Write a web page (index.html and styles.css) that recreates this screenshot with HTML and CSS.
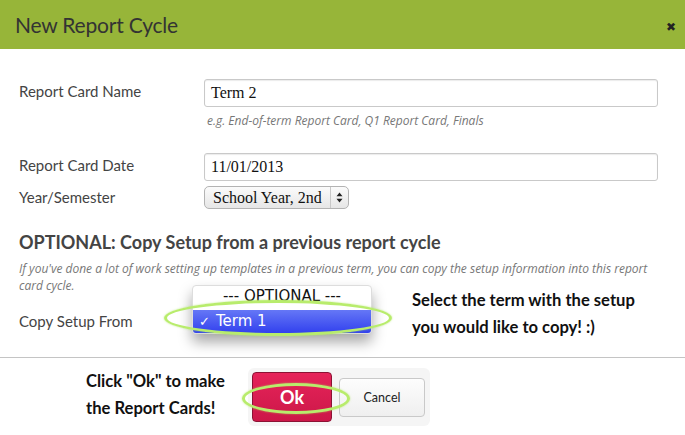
FILE: index.html
```html
<!DOCTYPE html>
<html>
<head>
<meta charset="utf-8">
<link rel="stylesheet" href="styles.css">
</head>
<body>
<div class="modal">
  <div class="modal-header">
    <h1 class="modal-title">New Report Cycle</h1>
    <span class="close">&#x2716;</span>
  </div>
  <div class="modal-body">
    <div class="row row-name">
      <label class="label">Report Card Name</label>
      <div class="field">
        <div class="input">Term 2</div>
        <div class="hint">e.g. End-of-term Report Card, Q1 Report Card, Finals</div>
      </div>
    </div>
    <div class="row row-date">
      <label class="label">Report Card Date</label>
      <div class="field"><div class="input">11/01/2013</div></div>
    </div>
    <div class="row row-year">
      <label class="label">Year/Semester</label>
      <div class="field">
        <div class="select">
          <span class="select-text">School Year, 2nd</span>
          <span class="select-arrows">
            <svg width="7" height="11" viewBox="0 0 7 11"><path d="M3.5 0.5 L6.5 4.2 L0.5 4.2 Z M0.5 6.8 L6.5 6.8 L3.5 10.5 Z" fill="#222"/></svg>
          </span>
        </div>
      </div>
    </div>
    <h2 class="section-title">OPTIONAL: Copy Setup from a previous report cycle</h2>
    <p class="section-note"><span>If you've done a lot of work setting up templates in a previous term, you can copy the setup information into this report</span><br><span>card cycle.</span></p>
    <div class="row row-copy">
      <label class="label">Copy Setup From</label>
      <div class="copy-field">
        <div class="menu">
          <div class="menu-item menu-top">--- OPTIONAL ---</div>
          <div class="menu-item menu-selected"><span class="check">&#x2713;</span>Term 1</div>
        </div>
        <div class="ring ring-menu"></div>
        <div class="callout callout-top">
          <div class="callout-line">Select the term with the setup</div>
          <div class="callout-line">you would like to copy! :)</div>
        </div>
      </div>
    </div>
  </div>
  <div class="modal-footer">
    <div class="callout callout-footer">Click "Ok" to make<br>the Report Cards!</div>
    <div class="buttons">
      <button class="btn btn-ok">Ok</button>
      <button class="btn btn-cancel">Cancel</button>
      <div class="ring ring-ok"></div>
    </div>
  </div>
</div>
</body>
</html>
```
FILE: styles.css
```css
* { box-sizing: border-box; }
html, body { margin: 0; padding: 0; background: #fff; }
body { width: 685px; height: 435px; overflow: hidden; font-family: "Lato", "Open Sans", sans-serif; color: #444; }

.modal-header {
  height: 49px;
  background: #97b539;
  display: flex;
  align-items: center;
  justify-content: space-between;
  padding: 0 9px 0 15px;
}
.modal-title {
  margin: 0;
  font-size: 21px;
  font-weight: 400;
  color: #333;
  letter-spacing: -0.2px;
}
.close { font-size: 12px; color: #222; margin-top: 3px; }

.modal-body { padding: 30px 27px 0 19px; height: 308px; }

.row { display: grid; grid-template-columns: 185px 1fr; }
.label { font-size: 15px; line-height: 18px; color: #444; padding-top: 3px; }

.input {
  height: 28px;
  border: 1px solid #c9c9c9;
  border-radius: 3px;
  box-shadow: inset 0 1px 1px rgba(0,0,0,0.08);
  font-family: "Liberation Serif", serif;
  font-size: 16px;
  line-height: 26px;
  padding-left: 6px;
  color: #111;
}
.hint { font-family: "Open Sans", sans-serif; font-size: 12px; font-style: italic; color: #777; line-height: 16px; margin-top: 6px; padding-left: 3px; }

.row-date { margin-top: 24px; }
.row-year { margin-top: 5px; }
.row-year .label { padding-top: 2px; }

.select {
  display: inline-flex;
  align-items: center;
  height: 23px;
  width: 145px;
  border: 1px solid #b3b3b3;
  border-radius: 5px;
  background: linear-gradient(#fbfbfb, #e6e6e6);
  font-family: "Liberation Serif", serif;
  font-size: 16px;
  color: #111;
}
.select-text { flex: 1; padding-left: 8px; line-height: 21px; white-space: nowrap; }
.select-arrows {
  width: 18px; height: 100%;
  border-left: 1px solid #c8c8c8;
  display: flex; align-items: center; justify-content: center;
}

.section-title { margin: 22px 0 0; font-size: 18px; font-weight: 700; color: #444; line-height: 22px; }
.section-note { font-family: "Open Sans", sans-serif; margin: 7px 0 0; font-size: 12px; font-style: italic; color: #777; line-height: 17px; white-space: nowrap; }

.row-copy { margin-top: -4px; }
.row-copy .label { padding-top: 22px; }
.copy-field { position: relative; height: 54px; margin-left: -11px; }

.menu {
  position: absolute;
  left: -1px; top: -5px;
  width: 180px; height: 49px;
  background: #fff;
  border: 1px solid #ddd;
  border-radius: 4px;
  box-shadow: 0 8px 14px rgba(0,0,0,0.35);
  overflow: hidden;
  font-family: "DejaVu Sans", sans-serif;
}
.menu-top { height: 24px; font-size: 15px; text-align: center; line-height: 20px; color: #111; }
.menu-selected {
  height: 23px;
  font-size: 15px;
  background: linear-gradient(#6577f6, #3241ee);
  color: #fff;
  line-height: 22px;
  padding-left: 6px;
}
.check { font-size: 13px; margin-right: 6px; }

.ring {
  position: absolute;
  border: 3px solid #b8ec6c;
  border-radius: 50%;
  box-shadow: 0 0 2px rgba(170,230,90,0.7);
  pointer-events: none;
}
.ring-menu { left: -29px; top: 10px; width: 228px; height: 36px; }

.callout { font-family: "Lato", sans-serif; font-weight: 700; font-size: 16.6px; color: #111; line-height: 27px; }
.callout-top { position: absolute; left: 219px; top: 2px; display: flex; flex-direction: column; gap: 10px; }
.callout-line { line-height: 17px; white-space: nowrap; }

.modal-footer {
  border-top: 1px solid #c4c4c4;
  display: flex;
  align-items: flex-start;
  padding: 10px 0 0 86px;
}
.callout-footer { width: 162px; }
.buttons {
  position: relative;
  display: flex;
  align-items: center;
  gap: 7px;
  background: #f5f5f5;
  border-radius: 6px;
  padding: 4px 5px 4px 4px;
}
.btn { font-family: "Lato", sans-serif; border-radius: 4px; cursor: pointer; }
.btn-ok {
  width: 80px; height: 50px;
  background: linear-gradient(#e6245a, #cc1748);
  border: 1px solid #8c1234;
  color: #fff;
  font-size: 18px;
  font-weight: 700;
}
.btn-cancel {
  width: 86px; height: 39px;
  background: linear-gradient(#fdfdfd, #efefef);
  border: 1px solid #c9c9c9;
  color: #222;
  font-size: 12.5px;
}
.ring-ok { left: -6px; top: 15px; width: 108px; height: 31px; }
```
